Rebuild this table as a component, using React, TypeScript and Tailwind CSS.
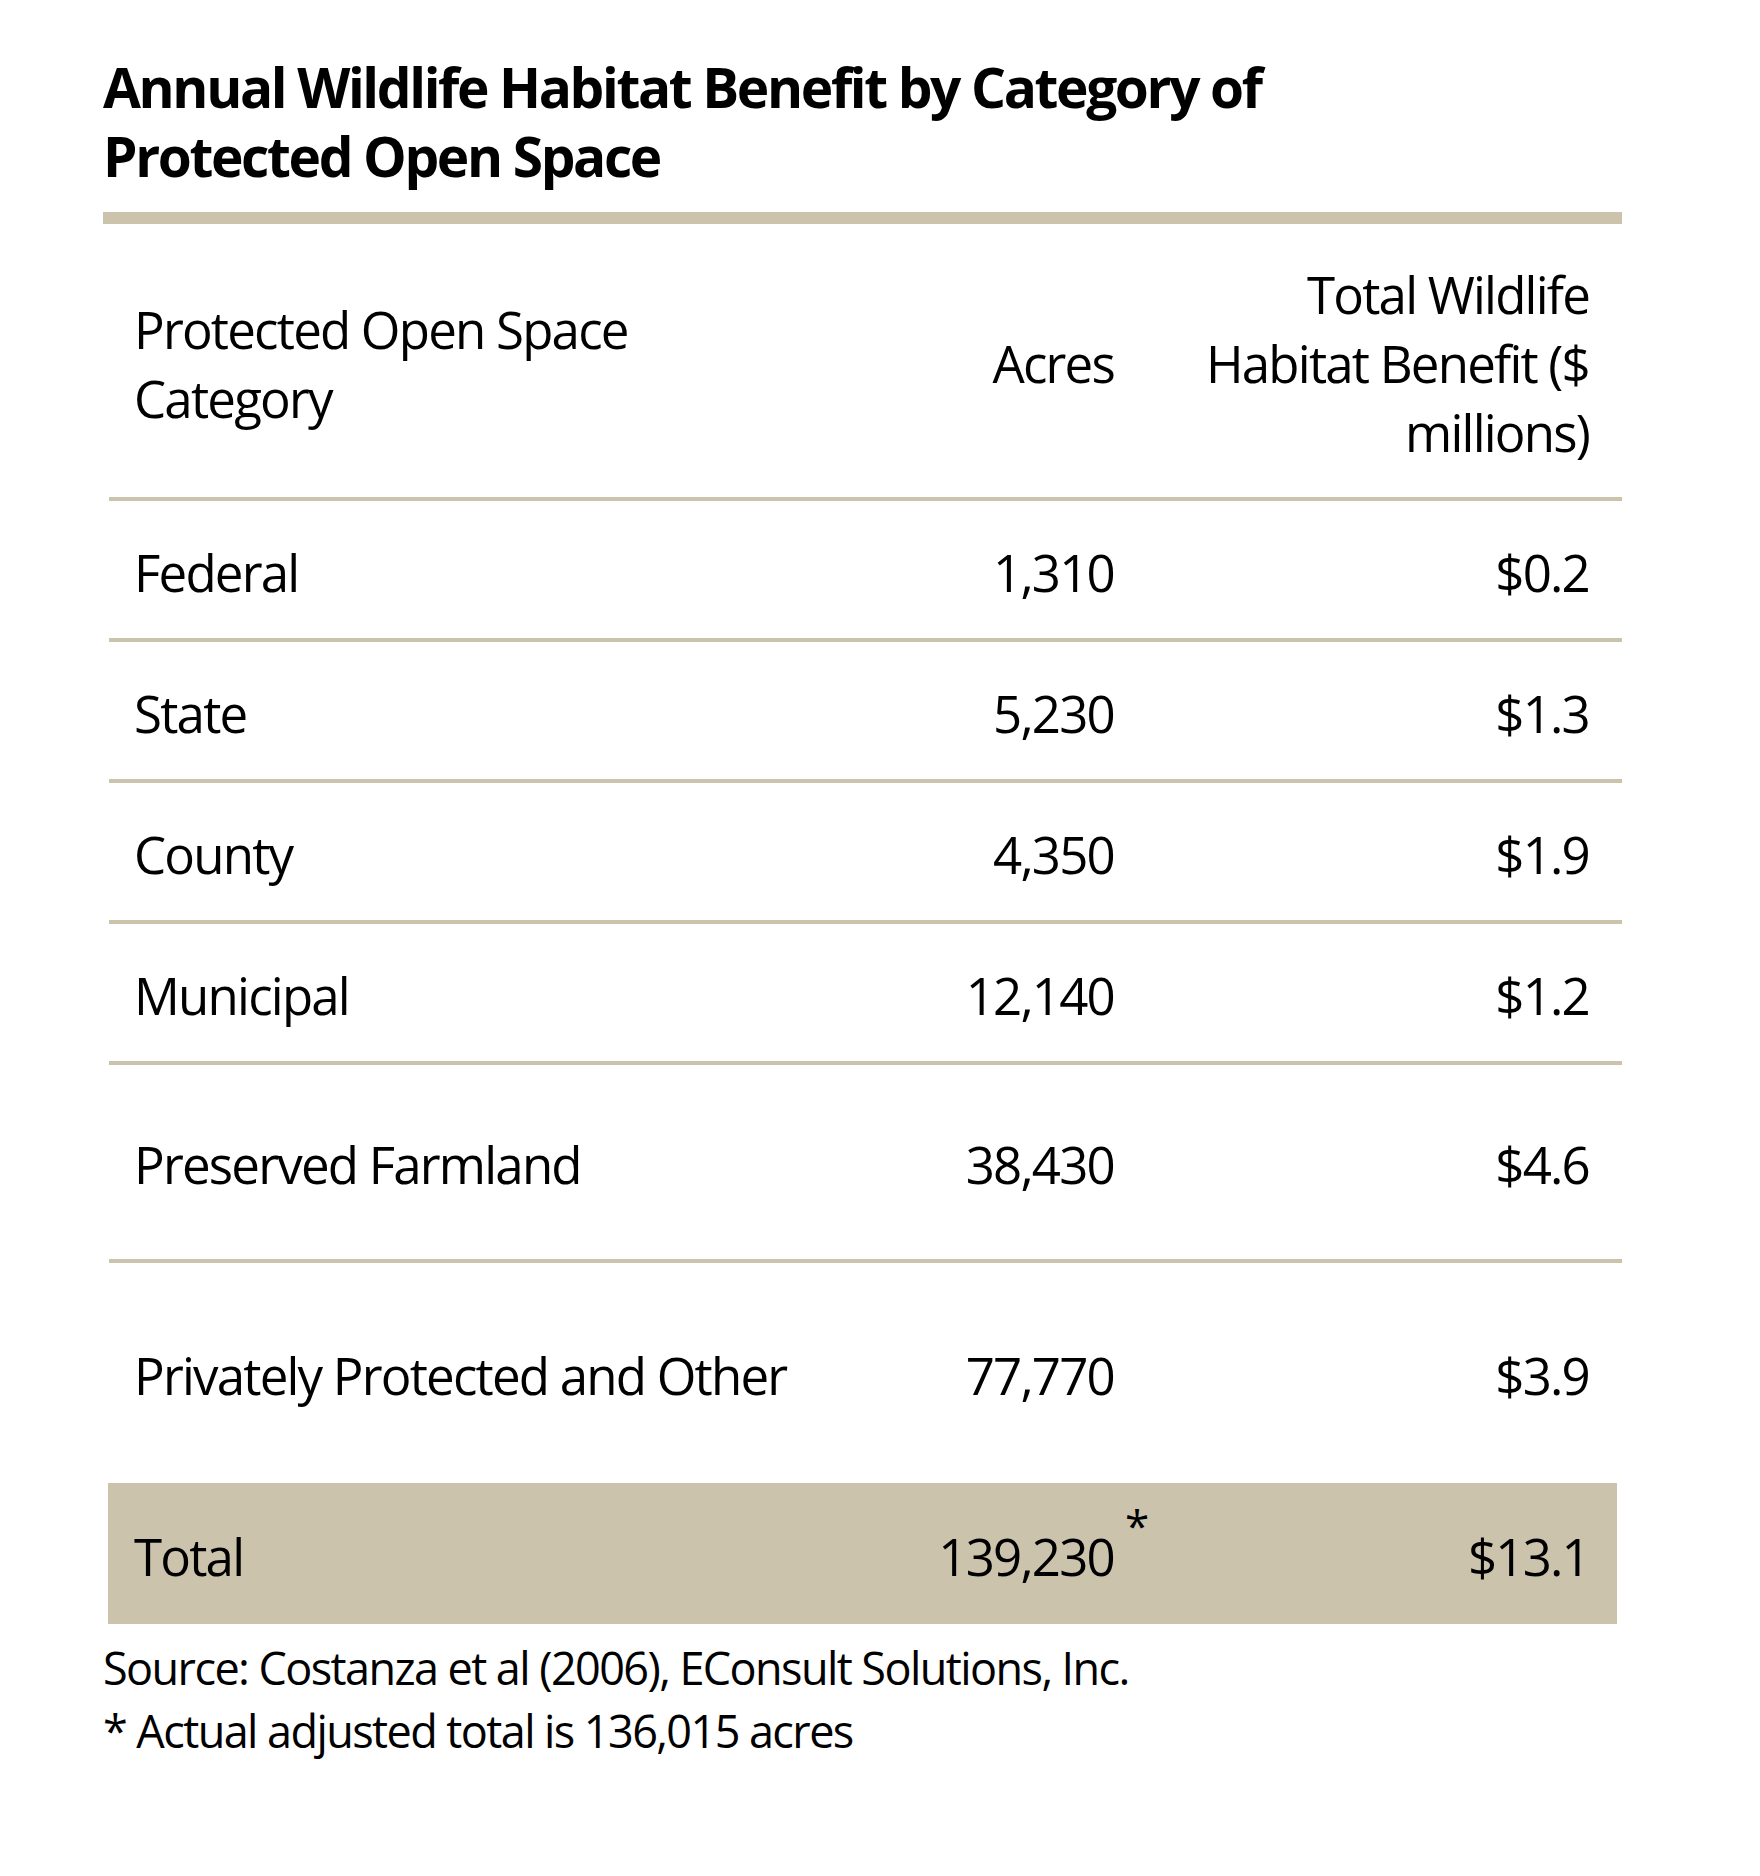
import React from 'react';

type Row = { category: string; acres: string; benefit: string; height: string; rule: boolean };

const rows: Row[] = [
  { category: 'Federal', acres: '1,310', benefit: '$0.2', height: 'h-[137px]', rule: true },
  { category: 'State', acres: '5,230', benefit: '$1.3', height: 'h-[137px]', rule: true },
  { category: 'County', acres: '4,350', benefit: '$1.9', height: 'h-[137px]', rule: true },
  { category: 'Municipal', acres: '12,140', benefit: '$1.2', height: 'h-[137px]', rule: true },
  { category: 'Preserved Farmland', acres: '38,430', benefit: '$4.6', height: 'h-[194px]', rule: true },
  { category: 'Privately Protected and Other', acres: '77,770', benefit: '$3.9', height: 'h-[220px]', rule: false },
];

export default function App() {
  return (
    <div className="min-h-screen bg-white text-black font-['Open_Sans',sans-serif]">
      <div className="w-[1622px] pl-[103px] pt-[52px]">
        <h1 className="text-[55px] leading-[69px] font-bold tracking-[-0.043em]">
          Annual Wildlife Habitat Benefit by Category of
          <br />
          Protected Open Space
        </h1>
        <div className="mt-[22px] h-[12px] bg-[#cbc3ac]" />

        {/* column headings */}
        <div className="flex items-center pt-[36px] pb-[30px] pl-[31px] pr-[33px] text-[51px] leading-[69px] tracking-[-0.035em]">
          <div className="flex-1">
            Protected Open Space
            <br />
            Category
          </div>
          <div className="w-[300px] text-right">Acres</div>
          <div className="w-[475px] text-right">
            Total Wildlife
            <br />
            Habitat Benefit ($
            <br />
            millions)
          </div>
        </div>
        <div className="ml-[6px] h-[4px] bg-[#cbc3ac]" />

        {rows.map(r => (
          <div key={r.category}>
            <div className={`flex items-center pt-[5px] pl-[31px] pr-[33px] text-[51px] leading-[69px] tracking-[-0.035em] ${r.height}`}>
              <div className="flex-1">{r.category}</div>
              <div className="w-[300px] text-right">{r.acres}</div>
              <div className="w-[475px] text-right">{r.benefit}</div>
            </div>
            {r.rule && <div className="ml-[6px] h-[4px] bg-[#cbc3ac]" />}
          </div>
        ))}

        <div className="mx-[5px] flex h-[141px] items-center bg-[#cbc3ac] pt-[5px] pl-[26px] pr-[28px] text-[51px] leading-[69px] tracking-[-0.035em]">
          <div className="flex-1">Total</div>
          <div className="w-[300px] text-right">
            <span className="relative">
              139,230
              <span className="absolute left-full top-[-18px] ml-[11px] text-[44px] leading-[44px]">*</span>
            </span>
          </div>
          <div className="w-[475px] text-right">$13.1</div>
        </div>

        <div className="mt-[12px] text-[45px] leading-[63px] tracking-[-0.035em]">
          <p>Source: Costanza et al (2006), EConsult Solutions, Inc.</p>
          <p>* Actual adjusted total is 136,015 acres</p>
        </div>
      </div>
    </div>
  );
}
